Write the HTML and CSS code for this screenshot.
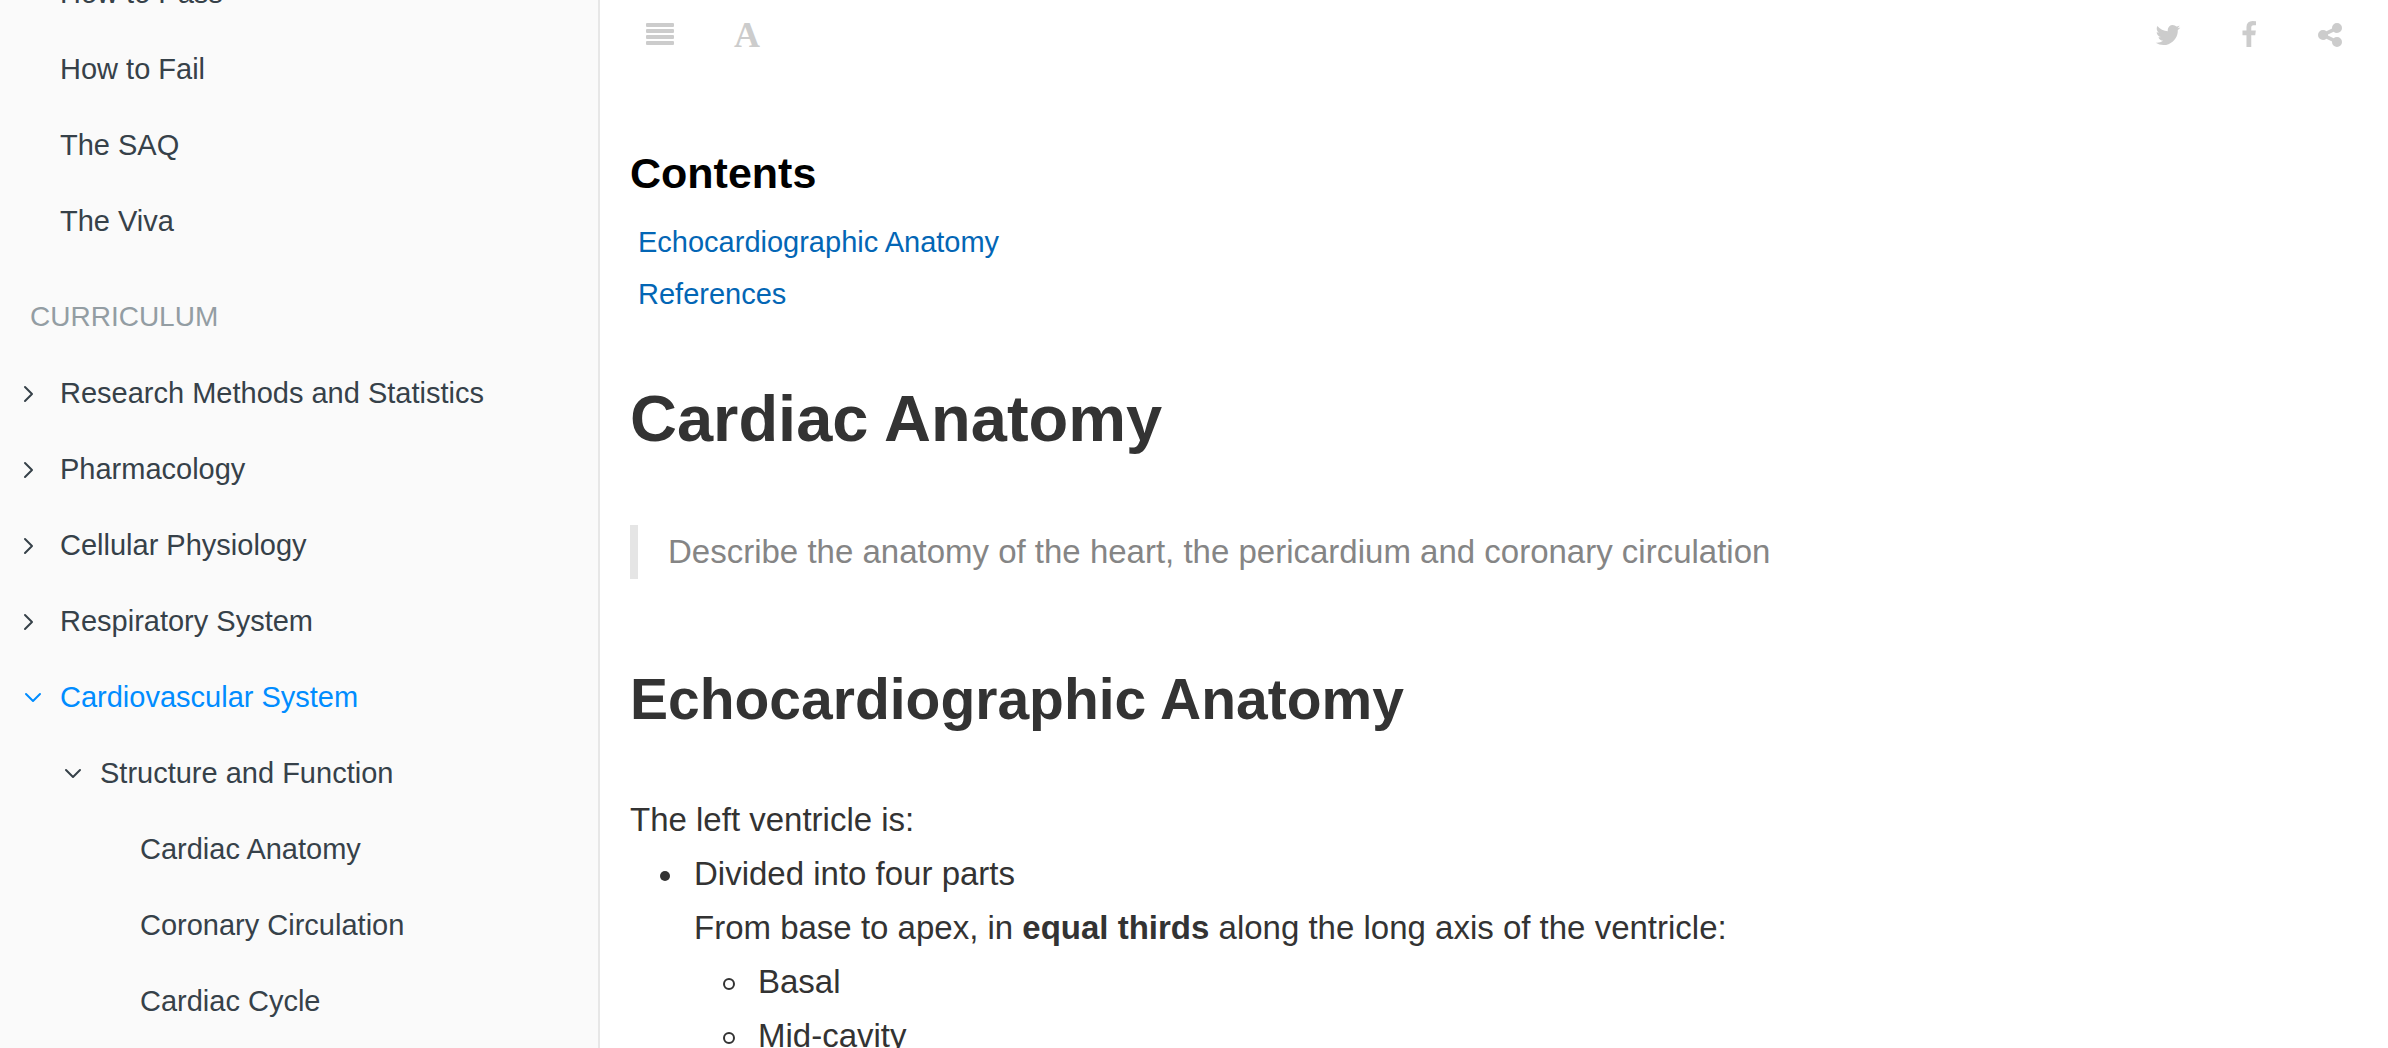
FILE: index.html
```html
<!DOCTYPE html>
<html lang="en">
<head>
<meta charset="utf-8">
<title>Cardiac Anatomy</title>
<link rel="stylesheet" href="styles.css">
</head>
<body>
<div class="book">
  <nav class="sidebar" aria-label="Chapters">
    <ul class="summary">
      <li><a class="chapter" href="#">How to Pass</a></li>
      <li><a class="chapter" href="#">How to Fail</a></li>
      <li><a class="chapter" href="#">The SAQ</a></li>
      <li><a class="chapter" href="#">The Viva</a></li>
      <li class="part">Curriculum</li>
      <li><a class="chapter" href="#"><svg class="chevron" viewBox="0 0 24 24" aria-hidden="true"><path d="M3 6l7 7-7 7"/></svg>Research Methods and Statistics</a></li>
      <li><a class="chapter" href="#"><svg class="chevron" viewBox="0 0 24 24" aria-hidden="true"><path d="M3 6l7 7-7 7"/></svg>Pharmacology</a></li>
      <li><a class="chapter" href="#"><svg class="chevron" viewBox="0 0 24 24" aria-hidden="true"><path d="M3 6l7 7-7 7"/></svg>Cellular Physiology</a></li>
      <li><a class="chapter" href="#"><svg class="chevron" viewBox="0 0 24 24" aria-hidden="true"><path d="M3 6l7 7-7 7"/></svg>Respiratory System</a></li>
      <li>
        <a class="chapter active" href="#"><svg class="chevron" viewBox="0 0 24 24" aria-hidden="true"><path d="M4 9l7 7 7-7"/></svg>Cardiovascular System</a>
        <ul class="articles">
          <li>
            <a class="chapter" href="#"><svg class="chevron" viewBox="0 0 24 24" aria-hidden="true"><path d="M4 9l7 7 7-7"/></svg>Structure and Function</a>
            <ul class="articles">
              <li><a class="chapter" href="#">Cardiac Anatomy</a></li>
              <li><a class="chapter" href="#">Coronary Circulation</a></li>
              <li><a class="chapter" href="#">Cardiac Cycle</a></li>
            </ul>
          </li>
        </ul>
      </li>
    </ul>
  </nav>
  <div class="page">
    <header class="toolbar">
      <button class="tool" type="button" aria-label="Toggle sidebar"><svg width="28" height="28" viewBox="0 0 28 28"><rect y="2" width="28" height="4" rx="1"/><rect y="8" width="28" height="4" rx="1"/><rect y="14" width="28" height="4" rx="1"/><rect y="20" width="28" height="4" rx="1"/></svg></button>
      <button class="tool tool-font" type="button" aria-label="Font settings">A</button>
      <span class="spacer"></span>
      <button class="tool" type="button" aria-label="Twitter"><svg width="24" height="28" viewBox="128 0 1536 1792"><path d="M1684 408q-67 98-162 167 1 14 1 42 0 130-38 259.500t-115.500 248.500-184.500 210.500-258 146-323 54.500q-271 0-496-145 35 4 78 4 225 0 401-138-105-2-188-64.500t-114-159.500q33 5 61 5 43 0 85-11-112-23-185.500-111.500t-73.500-205.500v-4q68 38 146 41-66-44-105-115t-39-154q0-88 44-163 121 149 294.500 238.500t371.500 99.500q-8-38-8-74 0-134 94.500-228.500t228.500-94.500q140 0 236 102 109-21 205-78-37 115-142 178 93-10 186-50z"/></svg></button>
      <button class="tool" type="button" aria-label="Facebook"><svg width="18" height="28" viewBox="320 0 1152 1792"><path d="M1343 12v264h-157q-86 0-116 36t-30 108v189h293l-39 296h-254v759h-306v-759h-255v-296h255v-218q0-186 104-288.500t277-102.500q147 0 228 12z"/></svg></button>
      <button class="tool" type="button" aria-label="Share"><svg width="24" height="28" viewBox="128 0 1536 1792"><path d="M1344 1024q133 0 226.500 93.500t93.500 226.500-93.500 226.500-226.500 93.500-226.500-93.500-93.500-226.500q0-12 2-34l-360-180q-92 86-218 86-133 0-226.500-93.500t-93.500-226.500 93.500-226.500 226.500-93.500q126 0 218 86l360-180q-2-22-2-34 0-133 93.500-226.500t226.500-93.500 226.500 93.500 93.500 226.500-93.500 226.500-226.500 93.500q-126 0-218-86l-360 180q2 22 2 34t-2 34l360 180q92-86 218-86z"/></svg></button>
    </header>
    <main class="content">
      <nav class="toc" aria-label="Contents">
        <h2 class="toc-title">Contents</h2>
        <ul class="toc-list">
          <li><a href="#echo">Echocardiographic Anatomy</a></li>
          <li><a href="#references">References</a></li>
        </ul>
      </nav>
      <h1 class="title">Cardiac Anatomy</h1>
      <blockquote class="quote">Describe the anatomy of the heart, the pericardium and coronary circulation</blockquote>
      <h2 class="section" id="echo">Echocardiographic Anatomy</h2>
      <p class="text">The left ventricle is:</p>
      <ul class="list">
        <li>Divided into four parts<br>From base to apex, in <strong>equal thirds</strong> along the long axis of the ventricle:
          <ul class="list sublist">
            <li>Basal</li>
            <li>Mid-cavity</li>
          </ul>
        </li>
      </ul>
    </main>
  </div>
</div>
</body>
</html>
```
FILE: styles.css
```css
*,
*::before {
  box-sizing: border-box;
}

body {
  margin: 0;
  font-family: "Liberation Sans", Arial, sans-serif;
  color: #333;
  background: #fff;
}

.book {
  display: flex;
  height: 100vh;
  overflow: hidden;
}

/* Sidebar */
.sidebar {
  flex: 0 0 600px;
  overflow: hidden;
  background: #fafafa;
  border-right: 2px solid #e7e7e7;
}

.summary,
.articles {
  margin: 0;
  padding: 0;
  list-style: none;
}

/* The chapter list is shown partly scrolled */
.summary {
  margin-top: -45px;
}

.articles {
  padding-left: 40px;
}

.chapter,
.part {
  display: flex;
  align-items: center;
  padding: 20px 30px 20px 60px;
  font-size: 29px;
  line-height: 36px;
  white-space: nowrap;
}

.chapter {
  color: #364149;
  text-decoration: none;
}

.chapter.active {
  color: #008cff;
}

.part {
  margin-top: 20px;
  padding-left: 30px;
  color: #939da3;
  font-size: 28px;
  text-transform: uppercase;
}

.chevron {
  width: 24px;
  height: 24px;
  margin-left: -38px;
  margin-right: 14px;
  fill: none;
  stroke: currentColor;
  stroke-width: 2;
  stroke-linecap: round;
  stroke-linejoin: round;
}

/* Toolbar */
.page {
  flex: 1;
  min-width: 0;
  overflow: hidden;
}

.toolbar {
  display: flex;
  align-items: center;
  height: 70px;
  padding: 0 16px;
}

.tool {
  display: flex;
  align-items: center;
  height: 70px;
  padding: 0 30px;
  border: 0;
  background: none;
  color: #ccc;
  cursor: pointer;
}

.tool svg {
  overflow: visible;
  fill: currentColor;
}

.tool-font {
  font: bold 36px/36px "Liberation Serif", "Times New Roman", serif;
}

.spacer {
  flex: 1;
}

/* Article */
.content {
  padding: 79px 30px 0;
}

.toc-title {
  margin: 0;
  font-size: 43px;
  line-height: 48px;
  color: #000;
}

.toc-list {
  margin: 19px 0 0;
  padding: 0 0 0 8px;
  list-style: none;
  font-size: 29px;
  line-height: 52px;
}

.toc-list a {
  color: #0366b5;
  text-decoration: none;
}

.title {
  margin: 61px 0 0;
  font-size: 65px;
  line-height: 76px;
}

.quote {
  margin: 68px 0 0;
  padding-left: 30px;
  border-left: 8px solid #e5e5e5;
  color: #858585;
  font-size: 33px;
  line-height: 54px;
}

.section {
  margin: 86px 0 0;
  font-size: 57px;
  line-height: 68px;
}

.text {
  margin: 60px 0 0;
  font-size: 33px;
  line-height: 54px;
}

.list {
  margin: 0;
  padding-left: 64px;
  list-style: none;
  font-size: 33px;
  line-height: 54px;
}

.list > li::before {
  content: "";
  display: inline-block;
  width: 10px;
  height: 10px;
  margin-left: -34px;
  margin-right: 24px;
  border-radius: 50%;
  background: #333;
  vertical-align: 4px;
}

.sublist > li::before {
  width: 12px;
  height: 12px;
  margin-left: -35px;
  margin-right: 23px;
  border: 2px solid #333;
  background: none;
  vertical-align: 3px;
}
```
